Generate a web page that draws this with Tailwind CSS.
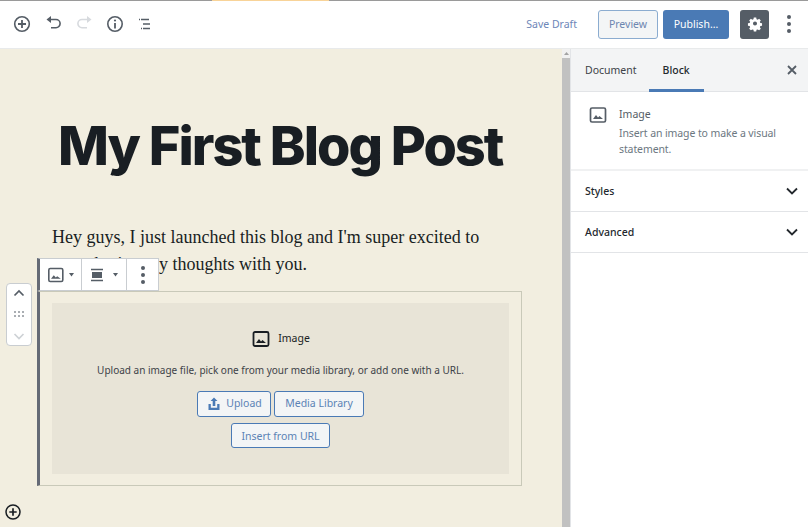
<!DOCTYPE html>
<html>
<head>
<meta charset="utf-8">
<script src="https://cdn.jsdelivr.net/npm/@tailwindcss/browser@4"></script>
</head>
<body class="m-0 overflow-hidden bg-white">
<div class="w-[808px] h-[527px] flex flex-col font-['Noto_Sans','Open_Sans',sans-serif] overflow-hidden">
  <div class="h-[1px] bg-[#9a9a9a] relative shrink-0"><div class="absolute left-[212px] w-[117px] h-[1px] bg-[#f8d398]"></div></div>
  <header class="h-[48px] shrink-0 flex items-center border-b border-[#e8eaeb] bg-white">
    <div class="flex items-center pl-[12px] gap-[9px] -mt-[1px] text-[#555d66]">
      <svg width="20" height="20" viewBox="0 0 20 20"><circle cx="10" cy="10" r="7.300" fill="none" stroke="#555d66" stroke-width="1.600"/><path d="M10 6v8M6 10h8" stroke="#555d66" stroke-width="1.800"/></svg>
      <svg width="22" height="22" viewBox="0 0 22 22" class="ml-[1px]"><path d="M8 6.500h6a3.600 3.600 0 0 1 0 8.200H9" fill="none" stroke="#555d66" stroke-width="1.600"/><path d="M9 3v7L4.500 6.500z" fill="#555d66"/></svg>
      <svg width="22" height="22" viewBox="0 0 22 22" class="ml-[1px]"><path d="M14 6.500H8a3.600 3.600 0 0 0 0 8.200h5" fill="none" stroke="#d7dade" stroke-width="1.600"/><path d="M13 3v7l4.500-3.500z" fill="#d7dade"/></svg>
      <svg width="20" height="20" viewBox="0 0 20 20"><circle cx="10" cy="10" r="7.200" fill="none" stroke="#555d66" stroke-width="1.600"/><path d="M10 9v5.500" stroke="#555d66" stroke-width="1.800"/><circle cx="10" cy="6.500" r="1.100" fill="#555d66"/></svg>
      <svg width="20" height="20" viewBox="0 0 20 20" class="ml-[1px]"><path d="M6 5.500h8M8 10h7M8 14.500h7M4 5.500h1M6 14.500h1" stroke="#555d66" stroke-width="1.600" fill="none"/></svg>
    </div>
    <div class="ml-auto flex items-center h-full">
      <span class="text-[10.500px] text-[#6d86b8] mr-[21px] mt-[1px]">Save Draft</span>
      <button class="w-[60px] h-[29px] -mt-[1px] pt-[2px] rounded-[3px] border border-[#8bacd0] bg-[#f3f5f6] text-[10.500px] text-[#6d86b0]">Preview</button>
      <button class="w-[66px] h-[29px] -mt-[1px] pt-[2px] ml-[5px] rounded-[3px] bg-[#4a7ab5] text-[10.500px] text-white">Publish...</button>
      <div class="w-[29px] h-[29px] ml-[11px] -mt-[1px] rounded-[3px] bg-[#555d66] flex items-center justify-center">
        <svg width="18" height="18" viewBox="0 0 20 20"><path fill="#fff" fill-rule="evenodd" d="M8.500 2.500h3l.4 2.100 1.400.6 1.800-1.200 2.100 2.100-1.200 1.800.6 1.400 2.100.4v3l-2.100.4-.6 1.400 1.200 1.800-2.100 2.100-1.800-1.200-1.400.6-.4 2.100h-3l-.4-2.100-1.400-.6-1.800 1.200-2.100-2.100 1.200-1.800-.6-1.400-2.100-.4v-3l2.100-.4.6-1.400-1.200-1.800 2.100-2.100 1.800 1.200 1.400-.6zM10 7.500a2.500 2.500 0 1 0 0 5 2.500 2.500 0 0 0 0-5z" transform="translate(1 0.500) scale(.9)"/></svg>
      </div>
      <div class="w-[39px] flex flex-col items-center gap-[3px] -mt-[1px]">
        <span class="w-[4px] h-[4px] rounded-full bg-[#555d66]"></span><span class="w-[4px] h-[4px] rounded-full bg-[#555d66]"></span><span class="w-[4px] h-[4px] rounded-full bg-[#555d66]"></span>
      </div>
    </div>
  </header>
  <div class="flex flex-1 min-h-0">
    <main class="w-[562px] bg-[#f2eee0] relative shrink-0">
      <h1 class="m-0 pt-[66px] pl-[58px] text-[54px] leading-[62px] font-extrabold tracking-[-2px] text-[#191e23] font-['Inter',sans-serif] whitespace-nowrap">My First Blog Post</h1>
      <p class="mt-[47px] ml-[52px] w-[450px] font-['Liberation_Serif',serif] text-[18px] leading-[27px] text-[#191e23]">Hey guys, I just launched this blog and I'm super excited to start sharing my thoughts with you.</p>
      <div class="ml-[37px] mt-[13px] w-[485px] h-[195px] border border-[#c9c9b9] border-l-[3px] border-l-[#656a76] pt-[11px] pr-[12px] pb-[11px] pl-[12px]">
        <div class="h-[171px] bg-[#e8e4d7] flex flex-col items-center">
          <div class="flex items-center gap-[5px] mt-[24px] h-[24px] text-[10.500px] text-[#191e23]">
            <svg width="20" height="20" viewBox="0 0 20 20"><rect x="2.500" y="3" width="15" height="14" rx="1.500" fill="none" stroke="#191e23" stroke-width="1.800"/><path d="M5 14l3-4 2 2.500 1.500-1.500L15 14z" fill="#191e23"/></svg>
            <span class="ml-[2px]">Image</span>
          </div>
          <p class="m-0 mt-[11px] text-[10px] leading-[16px] text-[#3d4248]">Upload an image file, pick one from your media library, or add one with a URL.</p>
          <div class="flex gap-[3px] mt-[13px]">
            <button class="w-[74px] h-[26px] rounded-[3px] border border-[#4a7ab5] bg-[#f3f5f6] text-[10.500px] text-[#5b83b5] flex items-center justify-center gap-[4px]">
              <svg width="16" height="16" viewBox="0 0 16 16"><path d="M8 1.500L11.500 5H9.300v5H6.700V5H4.500z" fill="#4a7ab5"/><path d="M2.500 8v6h11V8h-2.300v3.800H4.800V8z" fill="#4a7ab5"/></svg>
              <span>Upload</span>
            </button>
            <button class="w-[90px] h-[26px] rounded-[3px] border border-[#4a7ab5] bg-[#f3f5f6] text-[10.500px] text-[#5b83b5]">Media Library</button>
          </div>
          <button class="w-[99px] h-[25px] mt-[6px] pt-[2px] rounded-[3px] border border-[#4a7ab5] bg-[#f3f5f6] text-[10.500px] text-[#5b83b5]">Insert from URL</button>
        </div>
      </div>
      <div class="absolute left-[37px] top-[209px] h-[33px] w-[122px] flex bg-white border-t border-r border-[#c9cdd1] border-l-[3px] border-l-[#656a76] border-b border-b-[#c9cdd1]">
        <div class="w-[42px] flex items-center pl-[7px] gap-[4px] border-r border-[#c9cdd1]">
          <svg width="18" height="18" viewBox="0 0 18 18"><rect x="1.800" y="2.500" width="14" height="13" rx="1.500" fill="none" stroke="#555d66" stroke-width="1.600"/><path d="M4 12.800l2.800-3.500 2 2.300 1.400-1.300 3.600 2.500z" fill="#555d66"/></svg>
          <svg width="5" height="4" viewBox="0 0 5 4"><path d="M0 0h5L2.500 3.500z" fill="#555d66"/></svg>
        </div>
        <div class="w-[45px] flex items-center pl-[8px] gap-[10px] border-r border-[#c9cdd1]">
          <svg width="14" height="16" viewBox="0 0 14 16"><path d="M1 2.500h12M1 13.500h12" stroke="#555d66" stroke-width="1.500"/><rect x="2" y="5" width="10" height="6" fill="#555d66"/></svg>
          <svg width="5" height="4" viewBox="0 0 5 4" class="-ml-[1px]"><path d="M0 0h5L2.500 3.500z" fill="#555d66"/></svg>
        </div>
        <div class="flex-1 flex flex-col items-center justify-center gap-[3px]">
          <span class="w-[4px] h-[4px] rounded-full bg-[#555d66]"></span><span class="w-[4px] h-[4px] rounded-full bg-[#555d66]"></span><span class="w-[4px] h-[4px] rounded-full bg-[#555d66]"></span>
        </div>
      </div>
      <div class="absolute left-[6px] top-[234px] w-[26px] h-[63px] rounded-[4px] bg-white border border-[#c9cdd1] flex flex-col items-center">
        <svg width="14" height="10" viewBox="0 0 14 10" class="mt-[4px]"><path d="M2.500 7.500L7 3l4.500 4.500" fill="none" stroke="#555d66" stroke-width="1.700"/></svg>
        <svg width="10" height="6" viewBox="0 0 10 6" class="mt-[13px]"><path d="M0 1h2M4 1h2M8 1h2M0 5h2M4 5h2M8 5h2" stroke="#555d66" stroke-width="1"/></svg>
        <svg width="14" height="10" viewBox="0 0 14 10" class="mt-[14px]"><path d="M2.500 3L7 7.500 11.500 3" fill="none" stroke="#ced2d6" stroke-width="1.700"/></svg>
      </div>
      <svg width="20" height="20" viewBox="0 0 20 20" class="absolute left-[3px] top-[453px]"><circle cx="10" cy="10" r="7" fill="none" stroke="#191e23" stroke-width="1.500"/><path d="M10 6.300v7.400M6.300 10h7.400" stroke="#191e23" stroke-width="1.700"/></svg>
    </main>
    <div class="w-[8px] shrink-0 bg-[#f1f1f1] flex flex-col items-center">
      <div class="h-[9px] w-full flex items-center justify-center"><svg width="5" height="3" viewBox="0 0 5 3"><path d="M0 3h5L2.500 0z" fill="#a3a3a3"/></svg></div>
      <div class="w-full flex-1 bg-[#c1c1c1]"></div>
    </div>
    <aside class="w-[238px] shrink-0 min-w-0 border-l border-[#e2e4e7] bg-white text-[#191e23]">
      <div class="h-[43px] bg-[#f3f4f5] border-b border-[#e2e4e7] flex items-center relative text-[10.500px] pt-[2px]">
        <span class="ml-[14px] text-[#3d4248]">Document</span>
        <span class="ml-[26px] font-medium text-[#23282d] relative">Block</span>
        <div class="absolute left-[78px] bottom-[-1px] w-[55px] h-[3px] bg-[#4a7ab5]"></div>
        <svg width="12" height="12" viewBox="0 0 12 12" class="absolute right-[10px] top-[15px]"><path d="M2 2l8 8M10 2l-8 8" stroke="#555d66" stroke-width="1.800"/></svg>
      </div>
      <div class="h-[79px] border-b-2 border-[#f0f1f2] flex pl-[17px] pr-[16px] pt-[14px]">
        <svg width="20" height="20" viewBox="0 0 20 20" class="-mt-[1px] shrink-0"><rect x="2.500" y="3" width="15" height="14" rx="1.500" fill="none" stroke="#555d66" stroke-width="1.700"/><path d="M5 14l3-4 2 2.500 1.500-1.500L15 14z" fill="#555d66"/></svg>
        <div class="ml-[11px]">
          <div class="text-[10.500px] leading-[16px] text-[#555d66]">Image</div>
          <div class="text-[10.500px] leading-[15.500px] text-[#6c7781] mt-[4px] w-[170px] tracking-[-0.100px]">Insert an image to make a visual statement.</div>
        </div>
      </div>
      <div class="h-[41px] border-b border-[#e2e4e7] flex items-center justify-between pl-[14px] pr-[8px] text-[10.500px] font-medium text-[#23282d]"><span class="mt-[2px]">Styles</span><svg width="16" height="16" viewBox="0 0 16 16"><path d="M3 5.500l5 5 5-5" fill="none" stroke="#23282d" stroke-width="1.800"/></svg></div>
      <div class="h-[41px] border-b border-[#e2e4e7] flex items-center justify-between pl-[14px] pr-[8px] text-[10.500px] font-medium text-[#23282d]"><span class="mt-[2px]">Advanced</span><svg width="16" height="16" viewBox="0 0 16 16"><path d="M3 5.500l5 5 5-5" fill="none" stroke="#23282d" stroke-width="1.800"/></svg></div>
    </aside>
  </div>
</div>
</body>
</html>
